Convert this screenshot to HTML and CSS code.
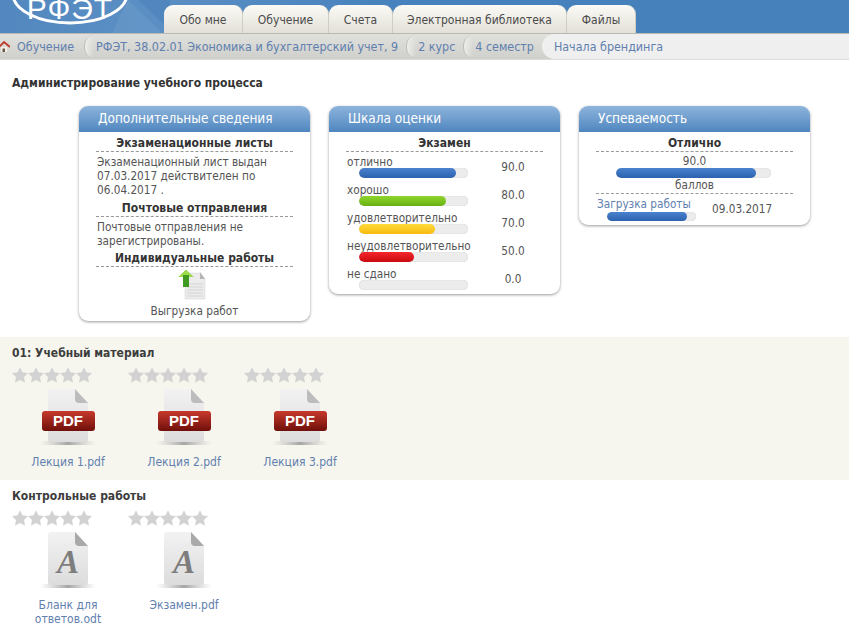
FILE: index.html
```html
<!DOCTYPE html>
<html lang="ru">
<head>
<meta charset="utf-8">
<title>Администрирование учебного процесса</title>
<link rel="stylesheet" href="styles.css">
</head>
<body>
<svg class="defs" width="0" height="0" aria-hidden="true">
  <defs>
    <linearGradient id="docfill" x1="0" y1="0" x2="0" y2="1"><stop offset="0" stop-color="#f2f2f2"/><stop offset="1" stop-color="#dcdcdc"/></linearGradient>
    <linearGradient id="pdfred" x1="0" y1="0" x2="0" y2="1"><stop offset="0" stop-color="#c8392c"/><stop offset="1" stop-color="#6e0f0a"/></linearGradient>
    <linearGradient id="shadow" x1="0" y1="0" x2="1" y2="0"><stop offset="0" stop-color="#bbb" stop-opacity="0"/><stop offset=".5" stop-color="#a5a5a5"/><stop offset="1" stop-color="#bbb" stop-opacity="0"/></linearGradient>
    <symbol id="star" viewBox="0 0 16 16"><path fill="#d2d2d2" stroke="#d2d2d2" stroke-width=".5" stroke-linejoin="round" d="M8 .8l2.300 4.800 5.300.7-3.900 3.700 1 5.300L8 12.700l-4.700 2.600 1-5.300L.4 6.300l5.300-.7z"/></symbol>
    <symbol id="pdf" viewBox="0 0 56 60">
      <rect x="0" y="55" width="56" height="4" fill="url(#shadow)"/>
      <path fill="url(#docfill)" d="M11 3h24l13 14v36q0 3-3 3H11q-3 0-3-3V6q0-3 3-3z"/>
      <path fill="#bcbcbc" d="M35 3l13 14H39q-4 0-4-4z"/>
      <rect x="2" y="25" width="53" height="20" rx="3" fill="url(#pdfred)"/>
      <text x="28" y="40" class="pdf-text" text-anchor="middle">PDF</text>
    </symbol>
    <symbol id="doc" viewBox="0 0 56 60">
      <rect x="0" y="55" width="56" height="4" fill="url(#shadow)"/>
      <path fill="url(#docfill)" d="M11 3h24l13 14v36q0 3-3 3H11q-3 0-3-3V6q0-3 3-3z"/>
      <path fill="#a9a9a9" d="M35 3l13 14H39q-4 0-4-4z"/>
      <text x="28" y="44" class="doc-text" text-anchor="middle">A</text>
    </symbol>
  </defs>
</svg>

<header class="topbar">
  <div class="logo">
    <svg width="170" height="33" viewBox="0 0 170 33">
      <path d="M128 0l34 33h-50z" fill="#7aa5d2" opacity=".3"/>
      <path d="M138 0h32v30z" fill="#3f78b4" opacity=".35"/>
      <ellipse cx="70" cy="-6" rx="57" ry="29" fill="none" stroke="#fff" stroke-width="3"/>
      <text x="70" y="19" class="logo-text" text-anchor="middle">РФЭТ</text>
    </svg>
  </div>
  <nav class="tabs">
    <a class="tab tab-a">Обо мне</a>
    <a class="tab tab-b">Обучение</a>
    <a class="tab tab-c">Счета</a>
    <a class="tab tab-d">Электронная библиотека</a>
    <a class="tab tab-e">Файлы</a>
  </nav>
</header>

<nav class="crumbs">
  <svg class="home" width="10" height="12" viewBox="0 0 10 12"><path d="M-1 6L4 1l6 5" fill="none" stroke="#c0392b" stroke-width="1.800"/><rect x="1" y="6" width="6" height="5" fill="#f3eee6"/><rect x="2.500" y="7.500" width="2.500" height="3.500" fill="#6b5a48"/></svg>
  <a class="crumb crumb-first">Обучение</a>
  <a class="crumb">РФЭТ, 38.02.01 Экономика и бухгалтерский учет, 9</a>
  <a class="crumb">2 курс</a>
  <a class="crumb">4 семестр</a>
  <a class="crumb crumb-last">Начала брендинга</a>
</nav>

<h1 class="page-title">Администрирование учебного процесса</h1>

<div class="cards">
  <section class="card">
    <h2 class="card-head">Дополнительные сведения</h2>
    <div class="card-body card-body-info">
      <h3 class="sub">Экзаменационные листы</h3>
      <p class="note">Экзаменационный лист выдан 07.03.2017 действителен по 06.04.2017 .</p>
      <h3 class="sub">Почтовые отправления</h3>
      <p class="note">Почтовые отправления не зарегистрированы.</p>
      <h3 class="sub">Индивидуальные работы</h3>
      <div class="upload">
        <svg width="30" height="32" viewBox="0 0 30 32">
          <path fill="#ececec" stroke="#d0d0d0" stroke-width=".5" d="M8 4h15l5 6v20H8z"/>
          <path fill="#b5b5b5" d="M23 3l5 7h-5z"/>
          <path stroke="#d4d4d4" stroke-width="1" d="M10 15h16M10 18h16M10 21h16M10 24h16M10 27h16"/>
          <path fill="#3f9a22" d="M9 1l7.500 7H12v10H6V8H1.500z"/>
          <path fill="#9fdc4a" d="M9 1l7.500 7H12V6H6v2H1.500z"/>
        </svg>
        <span>Выгрузка работ</span>
      </div>
    </div>
  </section>

  <section class="card">
    <h2 class="card-head">Шкала оценки</h2>
    <div class="card-body card-body-grades">
      <h3 class="sub">Экзамен</h3>
      <div class="grade"><div class="grade-main"><span class="grade-name">отлично</span><div class="bar"><i class="fill blue" style="width:89%"></i></div></div><span class="grade-val">90.0</span></div>
      <div class="grade"><div class="grade-main"><span class="grade-name">хорошо</span><div class="bar"><i class="fill green" style="width:80%"></i></div></div><span class="grade-val">80.0</span></div>
      <div class="grade"><div class="grade-main"><span class="grade-name">удовлетворительно</span><div class="bar"><i class="fill yellow" style="width:70%"></i></div></div><span class="grade-val">70.0</span></div>
      <div class="grade"><div class="grade-main"><span class="grade-name">неудовлетворительно</span><div class="bar"><i class="fill red" style="width:50%"></i></div></div><span class="grade-val">50.0</span></div>
      <div class="grade"><div class="grade-main"><span class="grade-name">не сдано</span><div class="bar"></div></div><span class="grade-val">0.0</span></div>
    </div>
  </section>

  <section class="card">
    <h2 class="card-head">Успеваемость</h2>
    <div class="card-body card-body-score">
      <h3 class="sub">Отлично</h3>
      <div class="score">
        <span>90.0</span>
        <div class="bar bar-score"><i class="fill blue" style="width:90%"></i></div>
        <span>баллов</span>
      </div>
      <div class="work">
        <div class="work-main"><a class="link">Загрузка работы</a><div class="bar bar-work"><i class="fill blue" style="width:90%"></i></div></div>
        <span class="work-date">09.03.2017</span>
      </div>
    </div>
  </section>
</div>

<section class="files files-shaded">
  <h2 class="files-title">01: Учебный материал</h2>
  <div class="file-row">
    <div class="file"><div class="stars"><svg><use href="#star"/></svg><svg><use href="#star"/></svg><svg><use href="#star"/></svg><svg><use href="#star"/></svg><svg><use href="#star"/></svg></div><svg class="file-icon"><use href="#pdf"/></svg><a class="link file-name">Лекция 1.pdf</a></div>
    <div class="file"><div class="stars"><svg><use href="#star"/></svg><svg><use href="#star"/></svg><svg><use href="#star"/></svg><svg><use href="#star"/></svg><svg><use href="#star"/></svg></div><svg class="file-icon"><use href="#pdf"/></svg><a class="link file-name">Лекция 2.pdf</a></div>
    <div class="file"><div class="stars"><svg><use href="#star"/></svg><svg><use href="#star"/></svg><svg><use href="#star"/></svg><svg><use href="#star"/></svg><svg><use href="#star"/></svg></div><svg class="file-icon"><use href="#pdf"/></svg><a class="link file-name">Лекция 3.pdf</a></div>
  </div>
</section>

<section class="files">
  <h2 class="files-title">Контрольные работы</h2>
  <div class="file-row">
    <div class="file"><div class="stars"><svg><use href="#star"/></svg><svg><use href="#star"/></svg><svg><use href="#star"/></svg><svg><use href="#star"/></svg><svg><use href="#star"/></svg></div><svg class="file-icon"><use href="#doc"/></svg><a class="link file-name">Бланк для ответов.odt</a></div>
    <div class="file"><div class="stars"><svg><use href="#star"/></svg><svg><use href="#star"/></svg><svg><use href="#star"/></svg><svg><use href="#star"/></svg><svg><use href="#star"/></svg></div><svg class="file-icon"><use href="#doc"/></svg><a class="link file-name">Экзамен.pdf</a></div>
  </div>
</section>
</body>
</html>
```

FILE: styles.css
```css
* { box-sizing: border-box; }
html, body { margin: 0; padding: 0; }
body {
  height: 640px;
  overflow: hidden;
  background: #fff;
  color: #555;
  font-family: "DejaVu Sans Condensed", "DejaVu Sans", sans-serif;
  font-stretch: condensed;
  font-size: 11.7px;
  line-height: 14px;
}
.defs { display: block; height: 0; }
.pdf-text { font: bold 15px "Liberation Sans", sans-serif; fill: #fff; }
.doc-text { font: italic bold 33px "Liberation Serif", serif; fill: #7d7d7d; }
.logo-text { font: 30px "Liberation Sans", sans-serif; fill: #fff; letter-spacing: 1px; }

.topbar {
  position: relative;
  display: flex;
  align-items: flex-end;
  height: 33px;
  padding-left: 164px;
  background: linear-gradient(90deg, #5288bf 0, #5b8fc4 150px, #4581bd 420px, #4781bb 100%);
}
.logo { position: absolute; left: 0; top: 0; width: 170px; height: 33px; }
.logo svg { display: block; }
.tabs { position: relative; display: flex; height: 28px; }
.tab {
  display: flex;
  align-items: center;
  justify-content: center;
  height: 28px;
  padding-top: 2px;
  border-radius: 9px 9px 0 0;
  border-right: 1px solid #cfcdc2;
  background: linear-gradient(#fbfaf6, #e2e0d7);
  color: #4b4b4b;
  font-size: 12px;
}
.tab-a { width: 79px; }
.tab-b { width: 86px; }
.tab-c { width: 64px; }
.tab-d { width: 174px; }
.tab-e { width: 69px; }

.crumbs {
  display: flex;
  align-items: stretch;
  height: 27px;
  border-top: 1px solid #b9b8b2;
  border-bottom: 1px solid #dcdcdc;
  background: linear-gradient(#e0e0dd, #cfcfcb);
  color: #5f80ae;
  font-size: 12.4px;
  line-height: 25px;
  white-space: nowrap;
}
.home { flex: none; align-self: center; margin-right: 7px; }
.crumb { position: relative; padding: 0 9px 0 11px; }
.crumb::before {
  content: "";
  position: absolute;
  left: -1px;
  top: 1px;
  bottom: 1px;
  width: 9px;
  border-left: 1px solid #bdbdb8;
  border-radius: 12px 0 0 12px;
  background: linear-gradient(90deg, #ecece9, transparent);
}
.crumb-first { padding: 0 11px 0 0; }
.crumb-first::before { display: none; }
.crumb-last {
  flex: 1;
  margin-left: -1px;
  padding-left: 12px;
  border-radius: 13px 0 0 13px;
  background: #efefef;
}
.crumb-last::before { display: none; }

.page-title {
  margin: 16px 0 16px 12px;
  color: #333;
  font-size: 12px;
  line-height: 14px;
  font-weight: bold;
}

.cards {
  display: flex;
  align-items: flex-start;
  gap: 19px;
  margin-left: 79px;
  height: 231px;
}
.card {
  flex: none;
  width: 231px;
  border-radius: 9px;
  background: #fff;
  box-shadow: 0 1px 3px rgba(0, 0, 0, .4);
  overflow: hidden;
}
.card-head {
  margin: 0;
  height: 26px;
  padding-left: 19px;
  background: linear-gradient(#8db4dc, #4f86bf);
  color: #fff;
  font-size: 13.500px;
  line-height: 24px;
  font-weight: normal;
}
.card-body { padding: 4px 17px 5px 17px; }
.card-body-info { padding-bottom: 3px; }
.card-body-grades { padding-bottom: 0; }
.card-body-score { padding-bottom: 4px; }
.sub {
  margin: 0 0 3px;
  height: 16px;
  border-bottom: 1px dashed #999;
  color: #333;
  font-size: 12px;
  line-height: 15px;
  font-weight: bold;
  text-align: center;
  white-space: nowrap;
}
.note { margin: 0; padding: 0 1px; }
.note + .sub { margin-top: 3.500px; }
.upload { display: flex; flex-direction: column; align-items: center; margin-top: -1px; }
.upload svg { display: block; margin: 0 6px 3px 0; }

.bar { position: relative; height: 10px; border-radius: 5px; background: #ececec; box-shadow: inset 0 0 1px #bbb; overflow: hidden; }
.fill { display: block; height: 100%; border-radius: 5px; }
.blue { background: linear-gradient(#4a82cf, #2c62ae); }
.green { background: linear-gradient(#8ed62c, #68b012); }
.yellow { background: linear-gradient(#ffdc3c, #f7b90f); }
.red { background: linear-gradient(#f5262c, #c90a10); }

.grade { display: flex; height: 28px; }
.grade:last-child { height: 27px; }
.grade-main { width: 122px; flex: none; }
.grade-name { display: block; padding-left: 1px; height: 13px; line-height: 14px; white-space: nowrap; }
.grade-main .bar { width: 109px; margin-left: 13px; }
.grade-val { flex: 1; text-align: center; line-height: 24px; padding-left: 15px; }

.score { display: flex; flex-direction: column; align-items: center; margin-top: -1px; border-bottom: 1px dashed #999; height: 40px; }
.bar-score { width: 155px; flex: none; margin-left: -2px; }
.work { display: flex; align-items: center; padding-top: 3px; }
.work-main { width: 115px; flex: none; margin-left: 1px; }
.link { color: #5f80ae; }
.work-main .link { display: block; white-space: nowrap; }
.bar-work { width: 89px; height: 9px; margin: 1px 0 0 10px; }

.files { padding: 9px 0 0 12px; }
.files-shaded { height: 143px; background: #f7f6ee; }
.files-title { margin: 0; height: 14px; color: #3d3d3d; font-size: 12px; line-height: 14px; font-weight: bold; }
.file-row { display: flex; }
.file { display: flex; flex-direction: column; align-items: center; width: 116px; padding-right: 4px; }
.stars { display: flex; align-self: flex-start; height: 16px; margin-top: 7px; width: 80px; }
.stars svg { display: block; width: 16px; height: 16px; flex: none; }
.file-icon { display: block; width: 56px; height: 60px; margin-top: 3px; flex: none; }
.file-name { display: block; width: 90px; margin-top: 9px; text-align: center; font-size: 12px; }
```
